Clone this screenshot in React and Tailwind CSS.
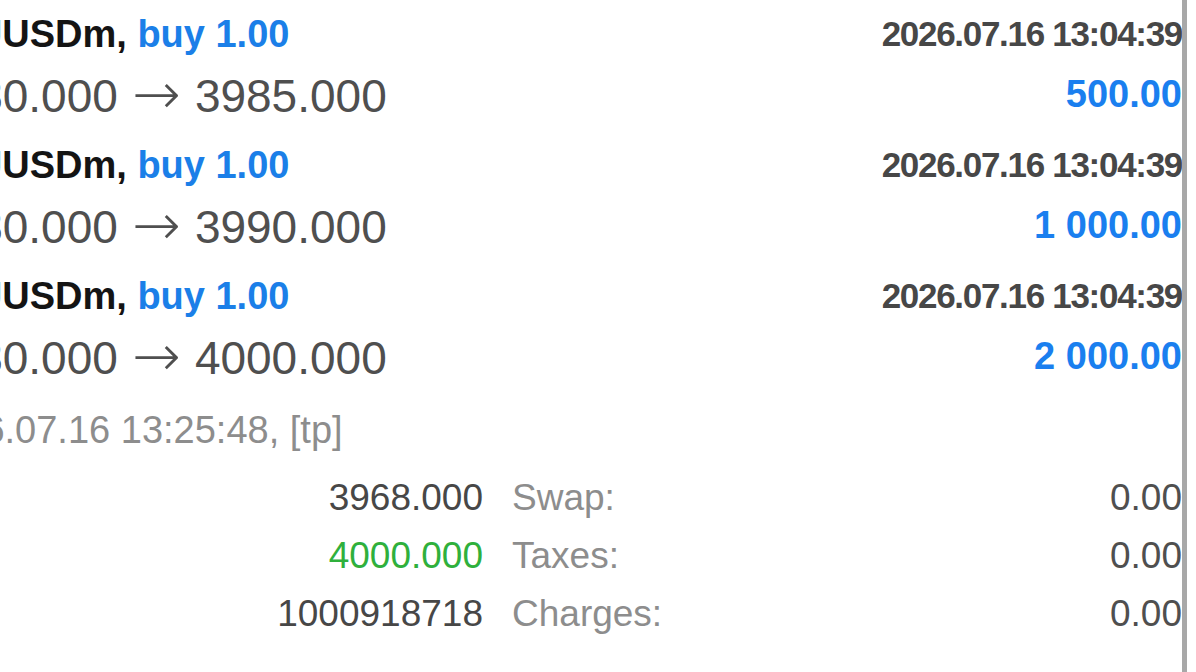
import React from "react";

const trades = [
  { open: "3980.000", close: "3985.000", profit: "500.00" },
  { open: "3980.000", close: "3990.000", profit: "1 000.00" },
  { open: "3980.000", close: "4000.000", profit: "2 000.00" },
];

const details = [
  { value: "3968.000", valueClass: "text-[#474747]", label: "Swap:", amount: "0.00" },
  { value: "4000.000", valueClass: "text-[#2fb03c]", label: "Taxes:", amount: "0.00" },
  { value: "1000918718", valueClass: "text-[#474747]", label: "Charges:", amount: "0.00" },
];

export default function App() {
  return (
    <div
      className="flex h-[672px] w-[1196px] overflow-hidden bg-white"
      style={{ fontFamily: '"Liberation Sans", Arial, sans-serif' }}
    >
      <div className="min-w-0 flex-1 overflow-hidden pt-[4px]">
        {/* Deals */}
        {trades.map((t, i) => (
          <div key={i} className="mb-[10px]">
            <div className="flex h-[60px] items-center justify-between whitespace-nowrap">
              <span className="-ml-[78px] text-[38px] font-bold leading-[60px] text-[#141414]">
                XAUUSDm, <span className="text-[#1b7fe8]">buy 1.00</span>
              </span>
              <span className="text-[35px] font-bold leading-[60px] tracking-[-1.3px] text-[#474747]">
                2026.07.16 13:04:39
              </span>
            </div>
            <div className="flex h-[61px] items-center justify-between whitespace-nowrap">
              <span className="-ml-[74px] text-[46px] leading-[61px] text-[#4f4f4f]">
                {t.open}
                <span className="inline-block w-[77px] translate-y-[2px] text-center font-['DejaVu_Sans'] text-[58px] font-extralight leading-none">
                  {" → "}
                </span>
                {t.close}
              </span>
              <span className="text-[38px] font-bold leading-[61px] text-[#1a7fef]">
                {t.profit}
              </span>
            </div>
          </div>
        ))}

        {/* Position summary */}
        <div className="-ml-[80px] h-[66px] whitespace-nowrap text-[38px] leading-[66px] text-[#8d8d8d]">
          2026.07.16 13:25:48, [tp]
        </div>

        <div className="mt-[6px]">
          {details.map((d) => (
            <div
              key={d.label}
              className="grid h-[58px] grid-cols-[483px_auto_1fr] items-center whitespace-nowrap text-[37px] leading-[58px]"
            >
              <span className={`text-right ${d.valueClass}`}>{d.value}</span>
              <span className="pl-[29px] text-[#8d8d8d]">{d.label}</span>
              <span className="text-right text-[#4f4f4f]">{d.amount}</span>
            </div>
          ))}
        </div>
      </div>
      <div className="w-[5px] shrink-0 bg-[#a8a8a8]" />
      <div className="w-[9px] shrink-0 bg-white" />
    </div>
  );
}
